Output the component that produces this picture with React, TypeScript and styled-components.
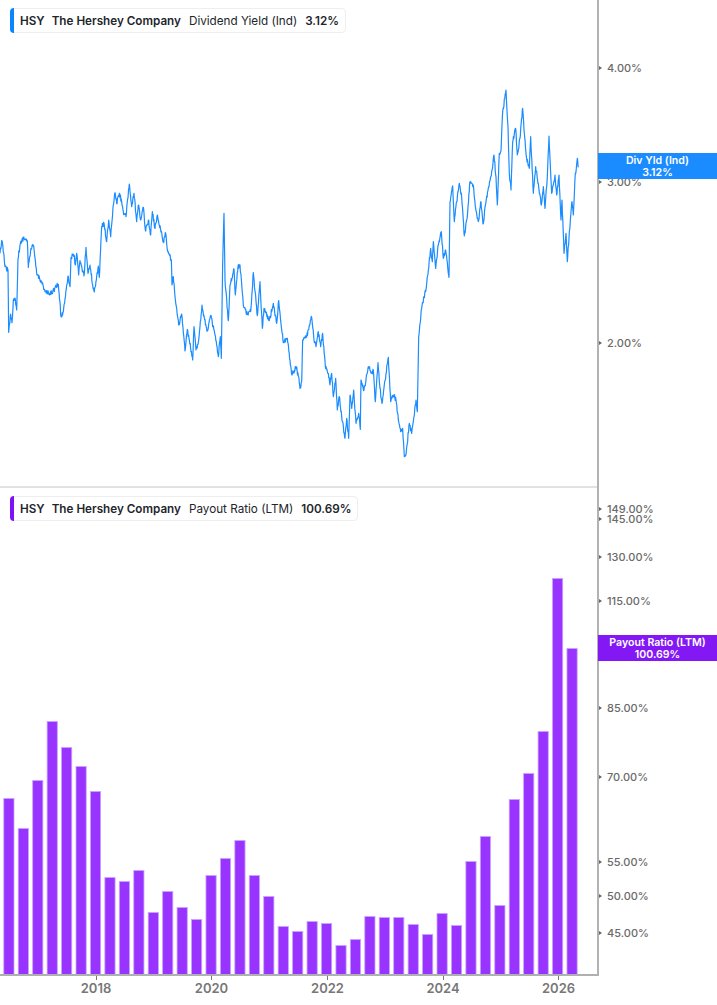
import React from 'react';
import styled, { createGlobalStyle } from 'styled-components';

const GlobalStyle = createGlobalStyle`
  html, body {
    margin: 0;
    padding: 0;
    background: #fff;
    font-family: 'Inter', 'Liberation Sans', sans-serif;
  }
`;

const Page = styled.div`
  width: 717px;
  height: 1005px;
  overflow: hidden;
  display: flex;
  flex-direction: column;
`;

const Pane = styled.div<{ $height: number }>`
  display: flex;
  height: ${p => p.$height}px;
`;

const Plot = styled.div`
  position: relative;
  width: 597px;
  border-bottom: 2px solid #e2e2e2;
  box-sizing: border-box;

  svg {
    display: block;
  }
`;

const BarsPlot = styled(Plot)`
  border-bottom-color: #b0b0b0;
`;

const Legend = styled.div<{ $color: string; $top: number }>`
  position: absolute;
  left: 10px;
  top: ${p => p.$top}px;
  height: 25px;
  box-sizing: border-box;
  display: flex;
  align-items: center;
  gap: 8px;
  padding: 0 6px 0 9px;
  background: #fff;
  border: 1px solid #eeeeee;
  border-radius: 4px;
  font-size: 11.7px;
  color: #22252b;
  white-space: nowrap;

  &::before {
    content: '';
    position: absolute;
    left: -1px;
    top: -1px;
    bottom: -1px;
    width: 4px;
    border-radius: 4px 0 0 4px;
    background: ${p => p.$color};
  }
`;

const Ticker = styled.span`
  font-weight: 600;
  margin-right: -1px;
`;

const Strong = styled.span`
  font-weight: 600;
`;

const Plain = styled.span`
  font-weight: 400;
`;

const ValueAxis = styled.div`
  position: relative;
  flex: 1;
  border-left: 2px solid #b2b2b2;
`;

const AxisLabel = styled.div<{ $y: number }>`
  position: absolute;
  left: 8px;
  top: ${p => p.$y - 7}px;
  height: 14px;
  line-height: 14px;
  font-size: 11px;
  font-weight: 500;
  color: #6a6a6a;

  &::before {
    content: '';
    position: absolute;
    left: -8px;
    top: 5px;
    border-left: 3px solid #666;
    border-top: 2px solid transparent;
    border-bottom: 2px solid transparent;
  }
`;

const Flag = styled.div<{ $color: string; $y: number }>`
  position: absolute;
  left: -1px;
  right: 0;
  top: ${p => p.$y}px;
  height: 26px;
  background: ${p => p.$color};
  color: #fff;
  font-size: 10.6px;
  font-weight: 600;
  line-height: 12px;
  text-align: center;
  padding-top: 2px;
  box-sizing: border-box;
`;

const TimeAxis = styled.div`
  position: relative;
  width: 597px;
  height: 29px;
`;

const YearTick = styled.div<{ $x: number }>`
  position: absolute;
  left: ${p => p.$x - 30}px;
  top: 0;
  width: 60px;
  text-align: center;
  font-size: 13px;
  font-weight: 600;
  line-height: 16px;
  padding-top: 4px;
  color: #777777;

  &::before {
    content: '';
    position: absolute;
    left: 29.5px;
    top: 0;
    width: 1px;
    height: 4px;
    background: #777;
  }
`;

// zoomed read-off of the yield line, [x, y] in page pixels
const lineLeft: [number, number][] = [
  [0,250],[5,212],[12,255],[15,290],[24,300],[26,487],[32,432],[36,458],[40,390],[46,388],[50,420],[54,265],[60,225],[70,203],[82,212],[85,292],[92,240],[100,225],[110,310],[125,335],[135,365],[150,373],[175,343],[183,440],[190,425],[200,345],[204,318],[210,350],[213,262],[222,255],[226,285],[230,250],[236,315],[240,272],[246,295],[252,318],[258,232],[264,310],[270,285],[278,345],[283,366],[295,288],[298,322],[305,170],[312,160],[320,215],[326,150],[332,200],[340,105],[345,68],[350,100],[358,70],[365,95],[370,125],[378,140],[388,42],[395,110],[402,70],[410,155],[415,105],[422,150],[430,112],[436,180],[445,150],[452,195],[457,125],[465,175],[472,135],[490,215],[497,190],[502,240],[514,270],[516,345],[520,320],[528,405],[536,465],[545,432],[555,543],[562,478],[578,570],[582,470],[588,540],[596,510],[606,405],[614,450],[622,483],[632,437],[645,495],[655,560],[661,500],[664,565],[668,280],[672,130],[675,330],[685,452],[690,345],[702,297],[706,375],[714,290],[720,285],[730,405],[742,432],[752,425],[760,308],[772,437],[780,335],[787,475],[792,415],[808,452],[820,400],[830,460],[836,392],[850,518],[862,505],[870,570],[876,615],[888,590],[897,625],
].map(([x, y]) => [x / 3, 170 + y / 3] as [number, number]);

const lineRight: [number, number][] = [
  [0,925],[5,905],[8,780],[20,770],[25,750],[35,712],[42,780],[48,800],[55,755],[62,800],[68,760],[76,860],[85,880],[90,915],[95,880],[100,950],[107,895],[112,990],[118,950],[125,1010],[135,1075],[140,1015],[146,1075],[150,945],[155,985],[161,930],[168,1030],[176,1000],[181,1048],[183,900],[192,930],[205,860],[215,880],[220,870],[226,965],[234,848],[240,925],[246,970],[258,880],[265,832],[272,965],[280,945],[288,960],[295,1020],[302,1055],[308,1045],[313,1130],[318,1125],[328,1030],[335,1060],[342,1010],[348,960],[352,995],[356,770],[365,685],[372,650],[378,630],[385,570],[392,505],[397,545],[400,485],[407,565],[415,495],[424,455],[430,535],[437,510],[447,592],[450,365],[458,318],[463,425],[470,365],[478,310],[485,350],[493,468],[502,410],[510,305],[520,315],[527,385],[535,425],[543,365],[549,432],[558,365],[566,320],[575,275],[582,225],[588,290],[592,375],[598,220],[603,212],[608,95],[618,30],[624,140],[628,280],[633,330],[638,185],[647,145],[652,225],[660,175],[668,85],[672,150],[680,235],[688,265],[692,170],[700,340],[707,260],[716,320],[724,375],[730,320],[735,385],[742,290],[747,168],[755,340],[765,285],[770,345],[777,285],[783,420],[786,360],[792,520],[798,460],[802,545],[808,455],[816,365],[820,405],[825,295],[832,235],[835,262],
].map(([x, y]) => [300 + x / 3, 80 + y / 3] as [number, number]);

// the daily wiggle between the read-off points
const buildLine = () => {
  const pts = [...lineLeft, ...lineRight];
  let seed = 12345;
  const rand = () => {
    seed = (seed * 16807) % 2147483647;
    return seed / 2147483647 - 0.5;
  };
  let d = `M${pts[0][0]} ${pts[0][1]}`;
  for (let i = 1; i < pts.length; i++) {
    const [x0, y0] = pts[i - 1];
    const [x1, y1] = pts[i];
    const steps = Math.max(2, Math.round((x1 - x0) / 0.4));
    for (let s = 1; s <= steps; s++) {
      const t = s / steps;
      const noise = s === steps ? 0 : rand() * 5;
      d += `L${(x0 + (x1 - x0) * t).toFixed(2)} ${(y0 + (y1 - y0) * t + noise).toFixed(2)}`;
    }
  }
  return d;
};

const barTops = [
  798, 828, 780, 721, 747, 766, 791, 877, 881, 870, 912, 891, 907, 919, 875, 858, 840, 875, 896, 926, 931,
  921, 923, 945, 939, 916, 917, 917, 924, 934, 913, 925, 861, 836, 905, 799, 773, 731, 578, 648,
];

const leftLabels = [
  { y: 68, t: '4.00%' },
  { y: 182, t: '3.00%' },
  { y: 343, t: '2.00%' },
];

const rightLabels = [
  { y: 509, t: '149.00%' },
  { y: 519, t: '145.00%' },
  { y: 557, t: '130.00%' },
  { y: 601, t: '115.00%' },
  { y: 651, t: '100.00%' },
  { y: 708, t: '85.00%' },
  { y: 777, t: '70.00%' },
  { y: 862, t: '55.00%' },
  { y: 896, t: '50.00%' },
  { y: 933, t: '45.00%' },
];

const years = [
  { x: 96, t: '2018' },
  { x: 211.5, t: '2020' },
  { x: 327.5, t: '2022' },
  { x: 443, t: '2024' },
  { x: 558.5, t: '2026' },
];

const TOP_PANE = 488;

const App: React.FC = () => (
  <Page>
    <GlobalStyle />
    <Pane $height={TOP_PANE}>
      <Plot>
        <svg width="597" height="486" viewBox="0 0 597 486">
          <path d={buildLine()} fill="none" stroke="#1a8cff" strokeWidth="1.2" strokeLinejoin="round" />
        </svg>
        <Legend $color="#0a84ff" $top={8}>
          <Ticker>HSY</Ticker>
          <Strong>The Hershey Company</Strong>
          <Plain>Dividend Yield (Ind)</Plain>
          <Strong>3.12%</Strong>
        </Legend>
      </Plot>
      <ValueAxis>
        {leftLabels.map(l => (
          <AxisLabel key={l.t} $y={l.y}>{l.t}</AxisLabel>
        ))}
        <Flag $color="#1a8cff" $y={153}>
          Div Yld (Ind)
          <br />
          3.12%
        </Flag>
      </ValueAxis>
    </Pane>
    <Pane $height={488}>
      <BarsPlot>
        <svg width="597" height="486" viewBox={`0 ${TOP_PANE} 597 486`}>
          {barTops.map((top, i) => (
            <rect
              key={i}
              x={3.8 + i * 14.44}
              y={top + 0.5}
              width={10.2}
              height={975 - top}
              fill="#9933ff"
              stroke="#c9a3ff"
              strokeWidth="0.8"
            />
          ))}
        </svg>
        <Legend $color="#7f12f5" $top={8}>
          <Ticker>HSY</Ticker>
          <Strong>The Hershey Company</Strong>
          <Plain>Payout Ratio (LTM)</Plain>
          <Strong>100.69%</Strong>
        </Legend>
      </BarsPlot>
      <ValueAxis>
        {rightLabels.map(l => (
          <AxisLabel key={l.t} $y={l.y - TOP_PANE}>{l.t}</AxisLabel>
        ))}
        <Flag $color="#8418f5" $y={635 - TOP_PANE}>
          Payout Ratio (LTM)
          <br />
          100.69%
        </Flag>
      </ValueAxis>
    </Pane>
    <TimeAxis>
      {years.map(y => (
        <YearTick key={y.t} $x={y.x}>{y.t}</YearTick>
      ))}
    </TimeAxis>
  </Page>
);

export default App;
